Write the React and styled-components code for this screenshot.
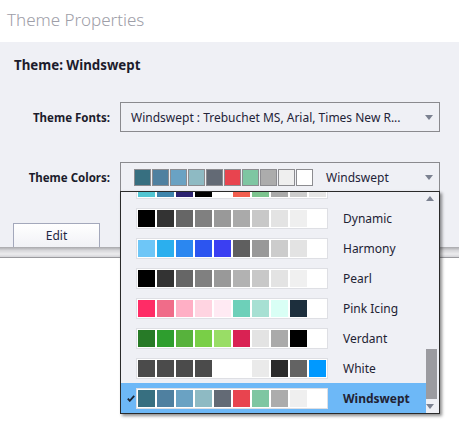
import React from "react";
import styled, { createGlobalStyle } from "styled-components";

const GlobalStyle = createGlobalStyle`
  html, body { margin: 0; padding: 0; background: #ffffff; }
  * { box-sizing: border-box; }
`;

const UI = `"Noto Sans", "Open Sans", sans-serif`;

const Page = styled.div`
  width: 459px;
  height: 421px;
  position: relative;
  overflow: hidden;
  background: #ffffff;
  font-family: ${UI};
`;

const TitleBar = styled.div`
  height: 42px;
  padding: 0 0 3px 7px;
  display: flex;
  align-items: center;
  font-size: 17px;
  font-weight: 300;
  color: #9e9ea8;
  background: #ffffff;
`;

const Panel = styled.div`
  height: 205px;
  background: #eff0f5;
  display: flex;
  flex-direction: column;
`;

const Heading = styled.div`
  margin: 15px 0 0 14px;
  line-height: 16px;
  font-size: 13.3px;
  font-weight: 700;
  color: #1c1c2c;
`;

const FormRow = styled.div`
  display: flex;
  align-items: center;
  margin-top: ${(p) => p.$top}px;
`;

const Label = styled.div`
  width: 110px;
  text-align: right;
  font-size: 11.5px;
  font-weight: 700;
  color: #1c1c2c;
`;

const Field = styled.div`
  position: relative;
  margin-left: 10px;
  width: 320px;
`;

const SelectBox = styled.div`
  height: 30px;
  border: 1px solid #8a8a8e;
  background: #eff0f5;
  display: flex;
  align-items: center;
  padding: 0 0 0 ${(p) => p.$pad}px;
  font-size: 12px;
  color: #232338;
`;

const SelectText = styled.span`
  flex: 1;
  white-space: nowrap;
  margin-left: ${(p) => p.$gap || 0}px;
`;

const Arrow = styled.span`
  width: 0;
  height: 0;
  margin-right: 6px;
  border-left: 4px solid transparent;
  border-right: 4px solid transparent;
  border-${(p) => (p.$up ? "bottom" : "top")}: 5px solid #7b8190;
`;

const MiniSwatches = styled.div`
  display: flex;
  gap: 1px;
`;

const MiniSwatch = styled.span`
  width: 17px;
  height: 17px;
  border: 1px solid #8c8c90;
  background: ${(p) => p.$c};
`;

const Dropdown = styled.div`
  position: absolute;
  top: 29px;
  left: 0;
  width: 320px;
  height: 223px;
  border: 1px solid #2a2a2a;
  background: #eff0f5;
  box-shadow: 2px 2px 3px rgba(0, 0, 0, 0.45);
  display: flex;
  z-index: 5;
`;

const ListViewport = styled.div`
  flex: 1;
  overflow: hidden;
`;

const List = styled.div`
  margin-top: -19px;
`;

const Option = styled.div`
  height: 30px;
  display: flex;
  align-items: center;
  padding-left: 15px;
  position: relative;
  background: ${(p) => (p.$selected ? "#6db8f7" : "transparent")};
  font-size: 12px;
  font-weight: ${(p) => (p.$selected ? 700 : 400)};
  color: #222233;
`;

const Check = styled.svg`
  position: absolute;
  left: 6px;
  top: 12px;
`;

const SwatchGroup = styled.div`
  display: flex;
  gap: 2px;
  padding: 1px;
  background: #ffffff;
  border: 1px solid #dedfe4;
`;

const Swatch = styled.span`
  width: 17px;
  height: 17px;
  background: ${(p) => p.$c};
`;

const OptionName = styled.span`
  margin-left: 15px;
`;

const ScrollBar = styled.div`
  width: 13px;
  display: flex;
  flex-direction: column;
  align-items: center;
  padding: 0 2px 0 0;
`;

const ScrollArrow = styled.div`
  height: 13px;
  display: flex;
  align-items: center;
  justify-content: center;
  width: 100%;
  padding-left: 2px;
`;

const Track = styled.div`
  flex: 1;
  width: 100%;
  display: flex;
  flex-direction: column;
  justify-content: flex-end;
`;

const Thumb = styled.div`
  height: 50px;
  width: 11px;
  background: #9b9ba0;
  margin-bottom: 1px;
`;

const EditButton = styled.button`
  margin: auto 0 0 13px;
  width: 87px;
  height: 24px;
  border: 1px solid #a3a8bb;
  border-bottom: none;
  background: linear-gradient(#ffffff, #f1f2f6);
  font-family: ${UI};
  font-size: 12px;
  color: #1e2744;
  padding: 0;
`;

const FooterShadow = styled.div`
  height: 11px;
  background: linear-gradient(#a8a8ac, #d7d7da 35%, #ececee 70%, #d4d4d8);
  border-bottom: 1px solid #9a9a9e;
`;

const themes = [
  { name: "", colors: ["#52c5d2", "#3e85ad", "#2b2270", "#000000", "#ffffff", "#f25e4e", "#7cc48e", "#aaaaaa", "#cccccc", "#e6e6e6"] },
  { name: "Dynamic", colors: ["#000000", "#333333", "#666666", "#808080", "#999999", "#aaaaaa", "#c8c8c8", "#e3e3e3", "#efefef", "#ffffff"] },
  { name: "Harmony", colors: ["#6ec6f7", "#2bafee", "#2b87f0", "#2c55f0", "#3b3ff2", "#5f5f5f", "#999999", "#cccccc", "#e3e3e3", "#ffffff"] },
  { name: "Pearl", colors: ["#000000", "#333333", "#666666", "#808080", "#999999", "#b2b2b2", "#c8c8c8", "#e3e3e3", "#f0f0f0", "#ffffff"] },
  { name: "Pink Icing", colors: ["#ff2c66", "#f06c89", "#ffafc5", "#ffd4e1", "#ffeaf3", "#6dd0b9", "#a7e0d3", "#d9fff5", "#1d2f3d", "#ffffff"] },
  { name: "Verdant", colors: ["#277a27", "#2e9e2e", "#57b23c", "#79cf47", "#99dd66", "#d92253", "#e3e3e3", "#aaaaaa", "#000000", "#ffffff"] },
  { name: "White", colors: ["#4b4b4b", "#4b4b4b", "#4b4b4b", "#4b4b4b", "#ffffff", "#ffffff", "#eaeaea", "#2b2b2b", "#636363", "#0099ff"] },
  { name: "Windswept", colors: ["#376f80", "#4f80a0", "#6aa2c3", "#8ebac3", "#636a75", "#e8444f", "#7ec6a2", "#acacac", "#efefef", "#ffffff"] },
];

const current = themes[themes.length - 1];

export default function App() {
  return (
    <Page>
      <GlobalStyle />
      <TitleBar>Theme Properties</TitleBar>
      <Panel>
        <Heading>Theme: Windswept</Heading>
        <FormRow $top={29}>
          <Label>Theme Fonts:</Label>
          <Field>
            <SelectBox $pad={10}>
              <SelectText>Windswept : Trebuchet MS, Arial, Times New R...</SelectText>
              <Arrow />
            </SelectBox>
          </Field>
        </FormRow>
        <FormRow $top={30}>
          <Label>Theme Colors:</Label>
          <Field>
            <SelectBox $pad={13}>
              <MiniSwatches>
                {current.colors.map((c, i) => (
                  <MiniSwatch key={i} $c={c} />
                ))}
              </MiniSwatches>
              <SelectText $gap={13}>Windswept</SelectText>
              <Arrow />
            </SelectBox>
            <Dropdown>
              <ListViewport>
                <List>
                  {themes.map((t, i) => {
                    const sel = t.name === "Windswept";
                    return (
                      <Option key={i} $selected={sel}>
                        {sel && (
                          <Check width="8" height="7" viewBox="0 0 8 7">
                            <polyline points="0.8,3.6 2.8,5.8 7.2,0.8" fill="none" stroke="#1d2433" strokeWidth="1.8" />
                          </Check>
                        )}
                        <SwatchGroup>
                          {t.colors.map((c, j) => (
                            <Swatch key={j} $c={c} />
                          ))}
                        </SwatchGroup>
                        <OptionName>{t.name}</OptionName>
                      </Option>
                    );
                  })}
                </List>
              </ListViewport>
              <ScrollBar>
                <ScrollArrow>
                  <Arrow $up />
                </ScrollArrow>
                <Track>
                  <Thumb />
                </Track>
                <ScrollArrow>
                  <Arrow />
                </ScrollArrow>
              </ScrollBar>
            </Dropdown>
          </Field>
        </FormRow>
        <EditButton>Edit</EditButton>
      </Panel>
      <FooterShadow />
    </Page>
  );
}
